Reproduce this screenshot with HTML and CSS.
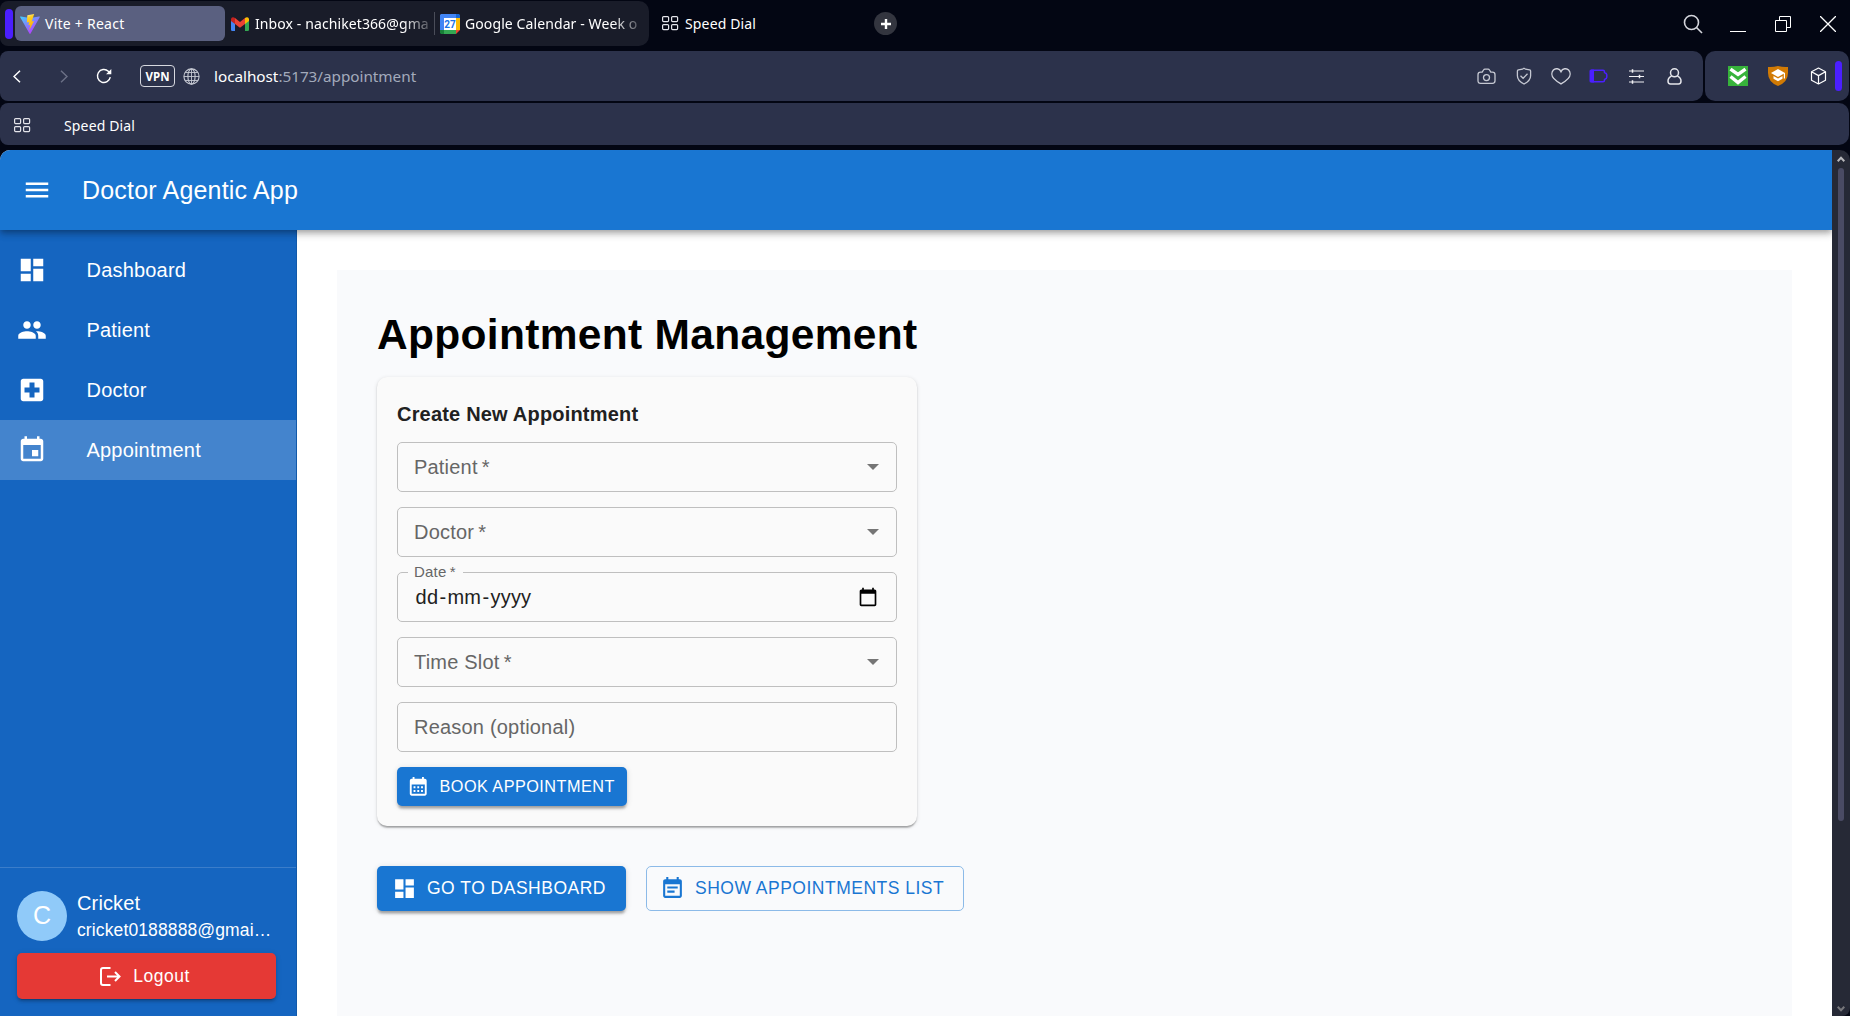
FILE: index.html
```html
<!DOCTYPE html>
<html lang="en">
<head>
<meta charset="utf-8">
<title>Doctor Agentic App</title>
<link rel="stylesheet" href="styles.css">
</head>
<body>
<div class="browser">
  <div class="tabstrip">
    <div class="tab-group">
      <span class="workspace-bar"></span>
      <div class="tab tab-active">
        <svg class="favicon" width="20" height="20" viewBox="0 0 32 32"><defs><linearGradient id="va" x1="0" y1="0" x2="0.7" y2="1"><stop offset="0" stop-color="#41d1ff"/><stop offset="1" stop-color="#bd34fe"/></linearGradient><linearGradient id="vb" x1="0.4" y1="0" x2="0.6" y2="1"><stop offset="0" stop-color="#ffea83"/><stop offset="0.2" stop-color="#ffcd22"/><stop offset="1" stop-color="#ffa800"/></linearGradient></defs><path fill="url(#va)" d="M31.5 5.3 16.9 31.3a1 1 0 0 1-1.8 0L.3 5.3a1 1 0 0 1 1-1.5L16 6.400l14.500-2.600a1 1 0 0 1 1 1.500z"/><path fill="url(#vb)" d="M22.700 0 12 2.100a.4.4 0 0 0-.3.4L11 13.500l3.500-.6-1 5.200 3-.8-1.700 8.500 7.700-14.700-3.800.8z"/></svg>
        <span class="tab-title t-vite">Vite + React</span>
      </div>
      <div class="tab tab-inbox">
        <svg width="18" height="14" viewBox="0 0 18 14"><path fill="#4285f4" d="M0 2v10.800q0 1.200 1.200 1.200H4V5z"/><path fill="#34a853" d="M18 2v10.800q0 1.200-1.200 1.200H14V5z"/><path fill="#c5221f" d="M0 2.500V1.600Q1.500-.8 4 1v6L0 4z"/><path fill="#fbbc04" d="M18 2.500V1.600Q16.500-.8 14 1v6l4-3z"/><path fill="#ea4335" d="M4 1l5 4 5-4v6l-5 3.800L4 7z"/></svg>
        <span class="tab-title t-inbox">Inbox - nachiket366@gma</span>
      </div>
      <span class="tab-divider"></span>
      <div class="tab tab-cal">
        <svg width="20" height="20" viewBox="0 0 20 20"><path fill="#4285f4" d="M1 0h15v4H4v12H0V1z"/><path fill="#1967d2" d="M16 0h3l1 1v3h-4z"/><path fill="#fbbc04" d="M16 4h4v12h-4z"/><path fill="#34a853" d="M4 16h12v4H4z"/><path fill="#188038" d="M0 16h4v4H1l-1-1z"/><path fill="#ea4335" d="M16 16h4l-4 4z"/><path fill="#fff" d="M4 4h12v12H4z"/><text x="10" y="13.600" text-anchor="middle" font-family="Roboto, sans-serif" font-size="10" font-weight="700" fill="#1a73e8">27</text></svg>
        <span class="tab-title t-cal">Google Calendar - Week o</span>
      </div>
    </div>
    <div class="tab tab-dial">
      <svg width="17" height="15" viewBox="0 0 17 15" fill="none" stroke="#e4e4ea" stroke-width="1.200"><rect x=".6" y=".6" width="6" height="5" rx="1"/><rect x="9.600" y=".6" width="6" height="5" rx="1"/><rect x=".6" y="8.600" width="6" height="5" rx="1"/><rect x="9.600" y="8.600" width="6" height="5" rx="1"/></svg>
      <span class="tab-title t-dial">Speed Dial</span>
    </div>
    <span class="new-tab"><svg width="12" height="12" viewBox="0 0 12 12"><path d="M6 1v10M1 6h10" stroke="#fff" stroke-width="2.400"/></svg></span>
    <div class="window-controls">
      <span><svg width="20" height="20" viewBox="0 0 20 20" fill="none" stroke="#d4d5dc" stroke-width="1.600"><circle cx="8.500" cy="8.500" r="7"/><path d="M13.500 13.500 19 19"/></svg></span>
      <span><svg width="16" height="18" viewBox="0 0 16 18"><path d="M0 16.500h16" stroke="#fff"/></svg></span>
      <span><svg width="16" height="16" viewBox="0 0 16 16" fill="none" stroke="#fff"><path d="M.5 4.500h11v11H.5zM4.500 4.500v-4h11v11h-4"/></svg></span>
      <span><svg width="16" height="16" viewBox="0 0 16 16"><path d="M0 0l16 16M16 0 0 16" stroke="#fff" stroke-width="1.300"/></svg></span>
    </div>
  </div>

  <div class="toolbar">
    <div class="address-panel">
      <svg class="nav-back" width="8" height="13" viewBox="0 0 8 13" fill="none" stroke="#fff" stroke-width="1.500"><path d="M7 .7 1 6.500l6 5.800"/></svg>
      <svg class="nav-fwd" width="8" height="13" viewBox="0 0 8 13" fill="none" stroke="#6c7187" stroke-width="1.400"><path d="M1 .7l6 5.800-6 5.800"/></svg>
      <svg class="nav-reload" width="17" height="17" viewBox="0 0 17 17" fill="none" stroke="#fff" stroke-width="1.400"><path d="M14.300 9.200A6.500 6.500 0 1 1 12.300 3.200l1.600 1.500"/><path fill="#fff" stroke="none" d="M15.300 1v5.200h-5.200z"/></svg>
      <span class="vpn">VPN</span>
      <svg class="globe" width="17" height="17" viewBox="0 0 17 17" fill="none" stroke="#c5c8d2" stroke-width="1.100"><circle cx="8.500" cy="8.500" r="7.600"/><ellipse cx="8.500" cy="8.500" rx="3.600" ry="7.600"/><path d="M8.500 1v15M1 8.500h15M2.200 4.500h12.600M2.200 12.500h12.600" stroke-width=".9"/></svg>
      <span class="url"><b>localhost</b>:5173/appointment</span>
      <div class="address-icons">
        <span><svg width="19" height="17" viewBox="0 0 19 17" fill="none" stroke="#c5c8d2" stroke-width="1.300"><path d="M3.500 4.200h1.700L6.500 2q.5-.9 1.500-.9h3q1 0 1.500.9l1.300 2.200h1.700q2.500 0 2.500 2.500v6.100q0 2.500-2.500 2.500h-12Q1 15.300 1 12.800V6.700q0-2.500 2.500-2.500z"/><circle cx="9.500" cy="9.600" r="3"/></svg></span>
        <span><svg width="16" height="18" viewBox="0 0 16 18" fill="none" stroke="#c5c8d2" stroke-width="1.300"><path d="M8 1.300l1.600.9 4 .7q1 .2 1 1.200v4.700q0 5-6.600 8.200-6.600-3.200-6.600-8.200V4.100q0-1 1-1.200l4-.7z"/><path d="M4.500 8.800l2.600 2.500 4.400-4.500"/></svg></span>
        <span><svg width="20" height="17" viewBox="0 0 20 17" fill="none" stroke="#d0d2db" stroke-width="1.400"><path d="M10 3.600C8.500.2 4.500-.1 2.400 2.100.2 4.400.6 8 2.700 10.400c2 2.200 4.300 3.800 7.300 5.500 3-1.700 5.300-3.300 7.300-5.500 2.100-2.400 2.500-6 .3-8.300C15.500-.1 11.500.2 10 3.600z"/></svg></span>
        <span><svg class="battery" width="19" height="14" viewBox="0 0 19 14" fill="none" stroke="#4b1fff" stroke-width="1.500"><path d="M3 1.200h11q1.500 0 1.500 1.500v.8q2.300.8 2.300 2.200v2.600q0 1.400-2.300 2.200v.8q0 1.500-1.500 1.500H3z"/><path stroke="none" fill="#4b1fff" d="M2 .4h3v13.200H2Q.5 13.600.5 12V2Q.5.4 2 .4z"/></svg></span>
        <span><svg width="15" height="15" viewBox="0 0 15 15" stroke="#f0f0f4" stroke-width="1.200"><path d="M0 2h15M0 7.500h15M0 13h15"/><path stroke-width="1.500" d="M3.500.2v3.600M10.500 5.700v3.600M3.500 11.200v3.600"/></svg></span>
        <span><svg width="15" height="17" viewBox="0 0 15 17" fill="none" stroke="#e4e5ea" stroke-width="1.500"><circle cx="7.500" cy="4.800" r="4"/><path d="M4.600 7.800Q1 9.700 1 13q0 3 2.500 3h8Q14 16 14 13q0-3.300-3.600-5.200"/></svg></span>
      </div>
    </div>
    <div class="extensions-panel">
      <span><svg width="20" height="20" viewBox="0 0 20 20"><path fill="#37b33b" d="M0 0h20v20H0z"/><path fill="none" stroke="#fff" stroke-width="3.400" d="M2.500 3.200 10 8.500l7.500-5.300M2.500 10.500l7.500 6 7.500-6"/></svg></span>
      <span><svg width="20" height="20" viewBox="0 0 20 20"><path fill="#d17a04" d="M0 1q5 .4 10-1 5 1.400 10 1v6q0 9-10 13Q0 16 0 7z"/><path fill="#fff" d="M10 3l7 4-7 4-7-4z"/><path fill="#fff" d="M5.500 10l4.500 2.500 4.500-2.500v2.700L10 15.200l-4.500-2.500z"/><path stroke="#fff" stroke-width="1.200" d="M16.400 7v5.500"/></svg></span>
      <span><svg width="17" height="18" viewBox="0 0 17 18" fill="none" stroke="#fff" stroke-width="1.200" stroke-linejoin="round"><path d="M8.500 1l7 3.800v8.400l-7 3.800-7-3.800V4.800zM1.500 4.800l7 3.800 7-3.800M8.500 8.600V17"/></svg></span>
      <i class="side-bar"></i>
    </div>
  </div>

  <div class="bookmarks">
    <svg width="17" height="15" viewBox="0 0 17 15" fill="none" stroke="#e4e4ea" stroke-width="1.200"><rect x=".6" y=".6" width="6" height="5" rx="1"/><rect x="9.600" y=".6" width="6" height="5" rx="1"/><rect x=".6" y="8.600" width="6" height="5" rx="1"/><rect x="9.600" y="8.600" width="6" height="5" rx="1"/></svg>
    <span class="t-dial">Speed Dial</span>
  </div>

  <div class="viewport">
    <div class="app">
      <header class="appbar">
        <svg class="menu-icon" width="30" height="30" viewBox="0 0 24 24" fill="#fff"><path d="M3 18h18v-2H3zm0-5h18v-2H3zm0-7v2h18V6z"/></svg>
        <div class="app-title">Doctor Agentic App</div>
      </header>
      <div class="app-body">
        <nav class="sidebar">
          <div class="nav-list">
            <a class="nav-item"><svg width="30" height="30" viewBox="0 0 24 24"><path d="M3 13h8V3H3zm0 8h8v-6H3zm10 0h8V11h-8zm0-18v6h8V3z"/></svg><span>Dashboard</span></a>
            <a class="nav-item"><svg width="30" height="30" viewBox="0 0 24 24"><path d="M16 11c1.660 0 2.990-1.340 2.990-3S17.660 5 16 5s-3 1.340-3 3 1.340 3 3 3m-8 0c1.660 0 2.990-1.340 2.990-3S9.660 5 8 5 5 6.340 5 8s1.340 3 3 3m0 2c-2.330 0-7 1.170-7 3.500V19h14v-2.500c0-2.330-4.670-3.500-7-3.500m8 0c-.29 0-.62.020-.97.050 1.160.84 1.970 1.970 1.970 3.450V19h6v-2.500c0-2.330-4.670-3.500-7-3.500"/></svg><span>Patient</span></a>
            <a class="nav-item"><svg width="30" height="30" viewBox="0 0 24 24"><path d="M19 3H5c-1.100 0-1.990.9-1.990 2L3 19c0 1.100.9 2 2 2h14c1.100 0 2-.9 2-2V5c0-1.100-.9-2-2-2m-1 11h-4v4h-4v-4H6v-4h4V6h4v4h4z"/></svg><span>Doctor</span></a>
            <a class="nav-item selected"><svg width="30" height="30" viewBox="0 0 24 24"><path d="M17 12h-5v5h5zM16 1v2H8V1H6v2H5c-1.110 0-1.990.9-1.990 2L3 19c0 1.100.89 2 2 2h14c1.100 0 2-.9 2-2V5c0-1.100-.9-2-2-2h-1V1zm3 18H5V8h14z"/></svg><span>Appointment</span></a>
          </div>
          <div class="user-panel">
            <div class="user">
              <div class="avatar">C</div>
              <div class="user-text">
                <div class="user-name">Cricket</div>
                <div class="user-mail">cricket0188888@gmai…</div>
              </div>
            </div>
            <div class="logout"><svg width="21" height="19" viewBox="0 0 21 19" fill="none" stroke="#fff" stroke-width="2"><path d="M10.500 1H3Q1 1 1 3v13q0 2 2 2h7.500M7 9.500h12M15 5l4.500 4.500L15 14"/></svg><span>Logout</span></div>
          </div>
        </nav>
        <main class="content">
          <section class="page">
            <h1>Appointment Management</h1>
            <form class="card">
              <h2>Create New Appointment</h2>
              <div class="field"><span>Patient&thinsp;*</span><i class="caret"></i></div>
              <div class="field"><span>Doctor&thinsp;*</span><i class="caret"></i></div>
              <div class="field field-date"><label>Date&thinsp;*</label><span class="date-value"><i>dd</i><i>-</i><i>mm</i><i>-</i><i>yyyy</i></span>
                <svg class="date-icon" viewBox="0 0 24 24"><path d="M20 3h-1V1h-2v2H7V1H5v2H4c-1.100 0-2 .9-2 2v16c0 1.100.9 2 2 2h16c1.100 0 2-.9 2-2V5c0-1.100-.9-2-2-2m0 18H4V8h16z"/></svg></div>
              <div class="field"><span>Time Slot&thinsp;*</span><i class="caret"></i></div>
              <div class="field"><span>Reason (optional)</span></div>
              <div class="btn btn-small"><svg width="22.500" height="22.500" viewBox="0 0 24 24"><path d="M19 4h-1V2h-2v2H8V2H6v2H5c-1.110 0-1.990.9-1.990 2L3 20c0 1.100.89 2 2 2h14c1.100 0 2-.9 2-2V6c0-1.100-.9-2-2-2m0 16H5V10h14zM9 14H7v-2h2zm4 0h-2v-2h2zm4 0h-2v-2h2zm-8 4H7v-2h2zm4 0h-2v-2h2zm4 0h-2v-2h2z"/></svg>BOOK APPOINTMENT</div>
            </form>
            <div class="actions">
              <div class="btn"><svg width="25" height="25" viewBox="0 0 24 24"><path d="M3 13h8V3H3zm0 8h8v-6H3zm10 0h8V11h-8zm0-18v6h8V3z"/></svg>GO TO DASHBOARD</div>
              <div class="btn btn-outlined"><svg width="25" height="25" viewBox="0 0 24 24"><path d="M17 10H7v2h10zm2-7h-1V1h-2v2H8V1H6v2H5c-1.110 0-1.990.9-1.990 2L3 19c0 1.100.89 2 2 2h14c1.100 0 2-.9 2-2V5c0-1.100-.9-2-2-2m0 16H5V8h14zm-5-5H7v2h7z"/></svg>SHOW APPOINTMENTS LIST</div>
            </div>
          </section>
        </main>
      </div>
    </div>
    <div class="scrollbar">
      <svg width="8" height="6" viewBox="0 0 8 6" fill="none" stroke="#b8b8bc" stroke-width="2"><path d="M.7 5.200 4 1.700l3.300 3.500"/></svg>
      <span class="thumb"></span>
      <svg class="arrow-down" width="8" height="6" viewBox="0 0 8 6" fill="none" stroke="#77777c" stroke-width="2"><path d="M.7.8 4 4.300 7.300.8"/></svg>
    </div>
  </div>
</div>
</body>
</html>
```
FILE: styles.css
```css
* { box-sizing: border-box; }

body {
  margin: 0;
  background: #030613;
  font-family: "Liberation Sans", Arial, sans-serif;
  overflow: hidden;
}

svg { display: block; flex: none; }
i { font-style: normal; }

/* Browser chrome */
.browser {
  display: flex;
  flex-direction: column;
  width: 1850px;
  height: 1016px;
  font-family: "Noto Sans", "Open Sans", sans-serif;
  font-size: 14px;
  color: #fff;
}

.tabstrip { display: flex; align-items: center; height: 51px; padding: 1px 0 5px; }

.tab-group {
  display: flex;
  align-items: center;
  width: 649px;
  height: 45px;
  padding-left: 5px;
  background: #191c29;
  border-radius: 8px 10px 10px 8px;
}

.workspace-bar { width: 8px; height: 30px; margin-right: 2px; border-radius: 4px; background: #4b1fff; }

.tab { display: flex; align-items: center; height: 35px; gap: 5px; white-space: nowrap; }
.tab-active { width: 210px; padding-left: 5px; border-radius: 6px; background: #5a6080; }
.tab-inbox { width: 209px; padding-left: 6px; gap: 6px; }
.tab-divider { width: 1px; height: 23px; background: #4a4d59; }
.tab-cal { width: 207px; padding-left: 5px; }
.tab-dial { width: 130px; padding-left: 13px; gap: 6px; }

.tab-title { padding-bottom: 1px; }
.t-vite { letter-spacing: 0.25px; }
.t-inbox, .t-cal {
  width: 178px;
  letter-spacing: 0.1px;
  -webkit-mask-image: linear-gradient(90deg, #000 148px, transparent 182px);
  mask-image: linear-gradient(90deg, #000 148px, transparent 182px);
}
.t-dial { letter-spacing: 0.15px; }

.new-tab {
  display: flex;
  align-items: center;
  justify-content: center;
  width: 23px;
  height: 23px;
  margin-left: 95px;
  border-radius: 50%;
  background: #33353f;
}

.window-controls { display: flex; margin-left: auto; }
.window-controls span { display: flex; align-items: center; justify-content: center; width: 45px; }

.toolbar { display: flex; gap: 2px; height: 50px; margin-right: 1px; }
.address-panel {
  display: flex;
  align-items: center;
  flex: 1;
  padding: 0 10px 0 13px;
  background: #2c324b;
  border-radius: 8px 10px 10px 8px;
}
.nav-fwd { margin-left: 39px; }
.nav-reload { margin-left: 28px; }
.vpn {
  width: 35px;
  height: 22px;
  margin-left: 27px;
  border: 1px solid #d6d8df;
  border-radius: 4px;
  font-size: 11.5px;
  font-weight: 700;
  line-height: 21px;
  text-align: center;
}
.globe { margin-left: 8px; }
.url { margin-left: 14px; font-size: 15.3px; letter-spacing: -0.03px; color: #a3aabb; }
.url b { font-weight: 400; color: #fff; }

.address-icons { display: flex; margin-left: auto; }
.address-icons span { display: flex; justify-content: center; align-items: center; width: 37.6px; }
.battery { margin-right: 2px; }

.extensions-panel {
  display: flex;
  align-items: center;
  width: 144px;
  padding-left: 13px;
  background: #2c324b;
  border-radius: 10px;
}
.extensions-panel span { display: flex; justify-content: center; width: 40px; }
.side-bar { width: 7px; height: 30px; margin-left: -3px; border-radius: 4px; background: #4b1fff; }

.bookmarks {
  display: flex;
  align-items: center;
  gap: 33px;
  height: 42px;
  margin: 2px 1px 5px 0;
  padding-left: 14px;
  padding-top: 3px;
  background: #2c324b;
  border-radius: 8px 10px 10px 8px;
}

/* Page viewport */
.viewport {
  display: flex;
  height: 866px;
  font-family: "Liberation Sans", Arial, sans-serif;
  overflow: hidden;
}

.scrollbar {
  display: flex;
  flex-direction: column;
  align-items: center;
  width: 18px;
  padding: 6px 0 4px;
  background: #262936;
  border-radius: 0 10px 8px 0;
}
.thumb { width: 6px; height: 653px; margin-top: 6px; border-radius: 3px; background: #4a4b64; }
.arrow-down { margin-top: auto; }

.app {
  display: flex;
  flex-direction: column;
  width: 1832px;
  background: #fff;
  border-radius: 10px 0 0 0;
  overflow: hidden;
}

.appbar {
  position: relative;
  display: flex;
  align-items: center;
  height: 80px;
  padding-left: 22px;
  gap: 30px;
  background: #1976d2;
  box-shadow: 0 2.5px 5px -1px rgba(0,0,0,.2), 0 5px 6px rgba(0,0,0,.14), 0 1px 12px rgba(0,0,0,.12);
}
.app-title { font-size: 25px; letter-spacing: 0.19px; }

.app-body { display: flex; flex: 1; }

.sidebar {
  display: flex;
  flex-direction: column;
  width: 297px;
  padding-top: 10px;
  background: #1565c0;
  border-right: 1px solid #1259a9;
}

.nav-item {
  display: flex;
  align-items: center;
  height: 60px;
  padding-left: 17px;
  gap: 39.5px;
  font-size: 20px;
  letter-spacing: 0.19px;
}
.nav-item svg { fill: #fff; }
.nav-item.selected { background: #4484cd; }

.user-panel {
  margin-top: auto;
  height: 149px;
  padding: 23px 19px 0 17px;
  border-top: 1px solid #3b7dca;
}
.user { display: flex; align-items: center; gap: 10px; height: 50px; }
.avatar {
  width: 50px;
  height: 50px;
  border-radius: 50%;
  background: #90caf9;
  font-size: 25px;
  line-height: 49px;
  text-align: center;
}
.user-text { flex: 1; min-width: 0; }
.user-name { margin-top: -1px; font-size: 20px; line-height: 28px; letter-spacing: 0.14px; }
.user-mail {
  font-size: 17.5px;
  line-height: 26px;
  letter-spacing: 0.12px;
  white-space: nowrap;
}
.logout {
  display: flex;
  align-items: center;
  justify-content: center;
  gap: 12px;
  width: 259px;
  height: 46px;
  margin-top: 12px;
  padding-right: 3px;
  border-radius: 5px;
  background: #e53935;
  font-size: 17.5px;
  letter-spacing: 0.5px;
  box-shadow: 0 4px 1px -3px rgba(0,0,0,.2), 0 2.5px 2.5px rgba(0,0,0,.14), 0 1px 6px rgba(0,0,0,.12);
}

.content { flex: 1; padding: 40px 40px 0; }
.page { height: 746px; padding: 40px; background: #f9fafc; color: #000; }

h1 {
  margin: 0;
  height: 67px;
  font-size: 42.5px;
  line-height: 50px;
  letter-spacing: 0.31px;
}

.card {
  width: 540px;
  height: 449px;
  padding: 20px;
  border-radius: 10px;
  background: #fafafa;
  box-shadow: 0 2.5px 1.5px -1px rgba(0,0,0,.2), 0 1px 1.5px rgba(0,0,0,.14), 0 1px 4px rgba(0,0,0,.12);
}

h2 {
  margin: 0;
  height: 45px;
  font-size: 20px;
  line-height: 34px;
  letter-spacing: 0.19px;
  color: #212121;
}

.field {
  position: relative;
  display: flex;
  align-items: center;
  justify-content: space-between;
  height: 50px;
  margin-bottom: 15px;
  padding: 0 16px;
  border: 1px solid #bfbfbf;
  border-radius: 5px;
  font-size: 20px;
  letter-spacing: 0.2px;
  color: #666;
}
.caret {
  margin-right: 1px;
  border: 6px solid transparent;
  border-top-color: #757575;
  border-bottom: 0;
}
/* Floating label sits over the outline */
.field label {
  position: absolute;
  top: -10px;
  left: 10px;
  padding: 0 7px 0 6px;
  background: #fafafa;
  font-size: 15px;
  line-height: 18px;
}
.date-value { padding-left: 1px; color: #212121; }
.date-value i { padding: 0 0.6px; }
.date-icon { width: 20px; height: 20px; margin: 0 2px 1px 0; }

.btn {
  display: flex;
  align-items: center;
  gap: 10px;
  width: max-content;
  height: 45px;
  padding: 0 20px 0 15px;
  border-radius: 5px;
  background: #1976d2;
  color: #fff;
  font-size: 17.5px;
  letter-spacing: 0.5px;
  box-shadow: 0 4px 2.5px -2.5px rgba(0,0,0,.2), 0 2.5px 2.5px rgba(0,0,0,.14), 0 1px 6px rgba(0,0,0,.12);
}
.btn svg { fill: currentColor; }
.btn-small { height: 39px; padding: 0 12.5px 0 10px; font-size: 16.25px; letter-spacing: 0.46px; }
.btn-outlined {
  padding: 0 19px 0 13px;
  border: 1px solid #8cbae8;
  background: transparent;
  color: #1976d2;
  box-shadow: none;
}

.actions { display: flex; gap: 20px; margin-top: 40px; }
```
